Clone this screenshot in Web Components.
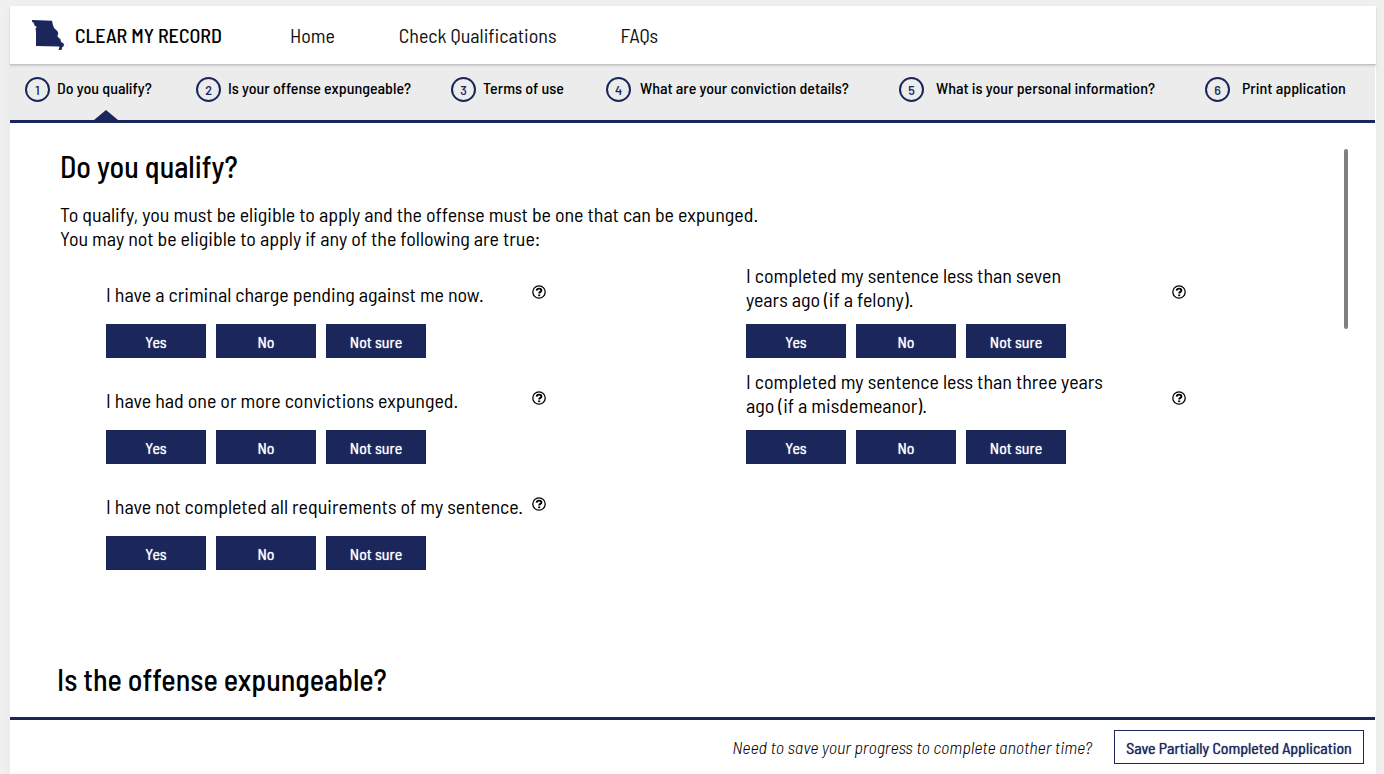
<!DOCTYPE html>
<html lang="en">
<head>
<meta charset="utf-8">
<title>Clear My Record</title>
<style>
:root{--navy:#1b275b;--grey:#ececec;--family:"Barlow Semi Condensed","Roboto Condensed","Liberation Sans",sans-serif}
body{margin:0;background:#f0f0f0;color:#000;font:20px/24px var(--family)}
</style>
</head>
<body>
<record-app></record-app>
<script>
function define(name, html, setup) {
  const template = document.createElement('template');
  template.innerHTML = html;
  customElements.define(name, class extends HTMLElement {
    connectedCallback() {
      if (this.shadowRoot) return;
      this.attachShadow({mode: 'open'}).append(template.content.cloneNode(true));
      if (setup) setup(this, this.shadowRoot);
    }
  });
}

define('state-logo', `
<style>:host{display:block;flex:none}svg{display:block}</style>
<svg width="32" height="30" viewBox="0 0 32 30" aria-hidden="true"><path fill="#1b275b" d="M0 0 L20 .8 L20.8 4.5 L22 8 L25.3 11 L26.2 13 L25.5 16.5 L28.6 19.5 L29 22 L31 23 L32 24.5 L31.5 26.5 L30.3 27 L29.5 30 L26.3 29.8 L27.5 27.5 L27 26.6 L4 26 L4 11.5 L3.5 8.5 L4.8 7 L2.5 5.5 L1.8 3 L0 1.6 Z"/></svg>`);

define('site-header', `
<style>
:host{display:flex;align-items:center;height:58px;padding:0 22px;background:#fff;border-bottom:1px solid #c4c4c4;box-shadow:0 1px 2px #0002;position:relative}
.brand{margin-left:11px;font-weight:500;white-space:nowrap}
nav{display:flex;gap:64px;margin-left:68px}
</style>
<state-logo></state-logo><span class="brand">CLEAR MY RECORD</span>
<nav><slot></slot></nav>`);

define('nav-link', `
<style>:host{display:block}a{color:#111;text-decoration:none;white-space:nowrap}</style>
<a href="#"><slot></slot></a>`);

define('step-item', `
<style>
:host{display:block;position:relative}
a{display:flex;align-items:center;gap:7px;color:#000;text-decoration:none;white-space:nowrap}
:host([spacing="medium"]) a{gap:9px}
:host([spacing="wide"]) a{gap:12px}
.n{flex:none;box-sizing:border-box;width:25px;height:25px;border:2px solid var(--navy);border-radius:50%;color:var(--navy);font:500 14px/21px var(--family);text-align:center}
.label{padding-bottom:3px;font:500 16px/20px var(--family)}
.mark{display:none;position:absolute;top:33px;left:69px;width:24px;height:10px;background:var(--navy);clip-path:polygon(50% 0,100% 100%,0 100%)}
:host([current]) .mark{display:block}
</style>
<a href="#"><span class="n"></span><span class="label"><slot></slot></span></a><span class="mark"></span>`,
(el, root) => {
  root.querySelector('.n').textContent = el.getAttribute('number');
  if (el.hasAttribute('current')) root.querySelector('a').setAttribute('aria-current', 'step');
});

define('step-bar', `
<style>
:host{display:block;background:var(--grey);border-bottom:3px solid var(--navy);margin-right:1px}
nav{display:grid;grid-template-columns:171fr 255fr 155fr 293fr 306fr 150fr;padding:12px 20px 18px 15px}
</style>
<nav aria-label="Steps"><slot></slot></nav>`);

define('help-button', `
<style>
:host{display:block;flex:none}
button{display:block;padding:0;border:0;background:none;cursor:pointer}
svg{display:block}
</style>
<button type="button" aria-label="Help"><svg width="14" height="14" viewBox="0 0 14 14" fill="none" stroke="#000"><circle cx="7" cy="7" r="6.2" stroke-width="1.3"/><path d="M4.7 5.6C4.8 4.3 5.8 3.6 7.1 3.6c1.4 0 2.3.7 2.3 1.8 0 1.5-2.2 1.5-2.2 3" stroke-width="1.9"/><path d="M6.2 10.3h2" stroke-width="1.7"/></svg></button>`);

define('answer-button', `
<style>
:host{display:block;flex:none}
button{display:block;width:100px;height:34px;padding:2px 0 0;border:0;background:var(--navy);color:#fff;font:400 16px/24px var(--family);text-shadow:0 0 1px #fff;cursor:pointer}
</style>
<button type="button"><slot></slot></button>`);

define('eligibility-question', `
<style>
:host{display:block;max-width:440px}
.head{display:flex;align-items:center;justify-content:space-between;height:48px}
.label{align-self:flex-end;min-height:29px;white-space:nowrap}
help-button{margin-top:10px}
.answers{display:flex;gap:10px;margin-top:13px}
</style>
<div role="group" aria-labelledby="q">
<div class="head"><div class="label" id="q"><slot></slot></div><help-button></help-button></div>
<div class="answers"><answer-button>Yes</answer-button><answer-button>No</answer-button><answer-button>Not sure</answer-button></div>
</div>`);

define('content-area', `
<style>
:host{display:block;flex:1;min-height:0;overflow:hidden;position:relative}
.thumb{position:absolute;top:26px;right:28px;width:4px;height:180px;border-radius:2px;background:#808080}
</style>
<slot></slot><div class="thumb"></div>`);

define('qualify-section', `
<style>
:host{display:block;padding:25px 30px 0 50px}
h1{margin:0 0 18px;font-size:30px;line-height:36px;font-weight:500}
p{margin:0}
.grid{display:grid;grid-template-columns:16fr 15fr;gap:11px 0;margin:13px 0 0 46px}
</style>
<h1>Do you qualify?</h1>
<p>To qualify, you must be eligible to apply and the offense must be one that can be expunged.<br>You may not be eligible to apply if any of the following are true:</p>
<div class="grid"><slot></slot></div>`);

define('offense-section', `
<style>
:host{display:block;padding:91px 30px 0 47px}
h2{margin:0;font-size:30px;line-height:36px;font-weight:500}
</style>
<h2>Is the offense expungeable?</h2>`);

define('save-bar', `
<style>
:host{display:block;border-top:3px solid var(--navy);margin-right:1px}
div{display:flex;align-items:center;justify-content:flex-end;gap:22px;padding:10px 11px}
i{font:italic 300 18px/24px var(--family);white-space:nowrap}
button{box-sizing:border-box;width:250px;height:34px;padding:2px 0 0;border:1px solid var(--navy);background:#fff;color:var(--navy);font:400 16px/24px var(--family);text-shadow:0 0 1px var(--navy);white-space:nowrap;cursor:pointer}
</style>
<div><i>Need to save your progress to complete another time?</i>
<button type="button">Save Partially Completed Application</button></div>`);

define('record-app', `
<style>
:host{display:block;box-sizing:border-box;height:100vh;padding:6px 8px 0 10px}
main{display:flex;flex-direction:column;height:100%;background:#fff;box-shadow:0 4px 12px #0000000a}
step-bar,site-header,save-bar{flex:none}
site-header{z-index:1}
</style>
<main>
<site-header><nav-link>Home</nav-link><nav-link>Check Qualifications</nav-link><nav-link>FAQs</nav-link></site-header>
<step-bar>
<step-item number="1" current>Do you qualify?</step-item>
<step-item number="2">Is your offense expungeable?</step-item>
<step-item number="3">Terms of use</step-item>
<step-item number="4" spacing="medium">What are your conviction details?</step-item>
<step-item number="5" spacing="wide">What is your personal information?</step-item>
<step-item number="6" spacing="wide">Print application</step-item>
</step-bar>
<content-area>
<qualify-section>
<eligibility-question>I have a criminal charge pending against me now.</eligibility-question>
<eligibility-question>I completed my sentence less than seven<br>years ago (if a felony).</eligibility-question>
<eligibility-question>I have had one or more convictions expunged.</eligibility-question>
<eligibility-question>I completed my sentence less than three years<br>ago (if a misdemeanor).</eligibility-question>
<eligibility-question>I have not completed all requirements of my sentence.</eligibility-question>
</qualify-section>
<offense-section></offense-section>
</content-area>
<save-bar></save-bar>
</main>`);
</script>
</body>
</html>
